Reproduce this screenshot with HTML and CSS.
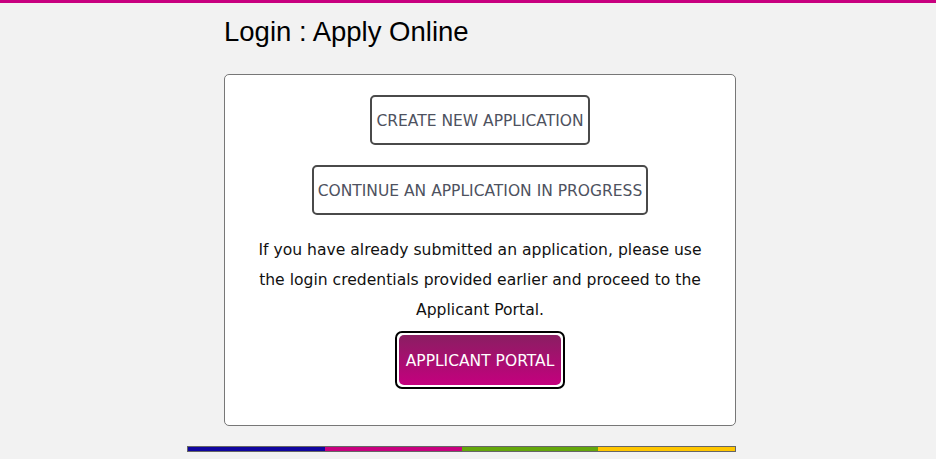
FILE: index.html
```html
<!DOCTYPE html>
<html>
<head>
<meta charset="utf-8">
<link rel="stylesheet" href="styles.css">
</head>
<body>
<div class="topbar"></div>
<main class="page">
  <h1 class="title">Login : Apply Online</h1>
  <section class="card">
    <a class="btn">CREATE NEW APPLICATION</a>
    <a class="btn">CONTINUE AN APPLICATION IN PROGRESS</a>
    <p class="note">If you have already submitted an application, please use the login credentials provided earlier and proceed to the Applicant Portal.</p>
    <a class="portal"><span class="portal-inner">APPLICANT PORTAL</span></a>
  </section>
  <div class="stripe">
    <span class="seg blue"></span><span class="seg magenta"></span><span class="seg green"></span><span class="seg yellow"></span>
  </div>
</main>
</body>
</html>
```
FILE: styles.css
```css
html, body {
  margin: 0;
  padding: 0;
  background: #f2f2f2;
  height: 100%;
}
body {
  font-family: "DejaVu Sans", sans-serif;
}
.topbar {
  height: 3px;
  background: #c8007f;
}
.page {
  width: 549px;
  margin-left: 187px;
  display: flex;
  flex-direction: column;
}
.title {
  margin: 14px 0 0 37px;
  font-family: "Liberation Sans", Arial, sans-serif;
  font-weight: normal;
  font-size: 27.5px;
  line-height: 30px;
  color: #000;
}
.card {
  margin: 27px 0 0 37px;
  width: 510px;
  height: 330px;
  background: #fff;
  border: 1px solid #777;
  border-radius: 5px;
  display: flex;
  flex-direction: column;
  align-items: center;
  padding-top: 20px;
}
.btn {
  display: flex;
  align-items: center;
  justify-content: center;
  box-sizing: border-box;
  height: 50px;
  padding: 2px 4px 0;
  border: 2px solid #4a4a4a;
  border-radius: 5px;
  font-size: 15.5px;
  color: #4e5260;
  margin-bottom: 20px;
}
.note {
  margin: 0;
  width: 452px;
  text-align: center;
  font-size: 15.6px;
  line-height: 30px;
  color: #111;
}
.portal {
  margin-top: 6px;
  display: block;
  border: 2px solid #000;
  border-radius: 7px;
  padding: 2px;
  background: #fff;
}
.portal-inner {
  display: flex;
  align-items: center;
  justify-content: center;
  box-sizing: border-box;
  width: 162px;
  height: 50px;
  padding-top: 2px;
  border-radius: 5px;
  background: linear-gradient(#8a1e62, #c4007e);
  color: #fff;
  font-size: 15.5px;
}
.stripe {
  margin-top: 20px;
  height: 4px;
  border: 1px solid #666;
  display: flex;
}
.seg { flex: 1; }
.blue { background: #10069f; }
.magenta { background: #c8007f; }
.green { background: #64a70b; }
.yellow { background: #ffc600; }
```
